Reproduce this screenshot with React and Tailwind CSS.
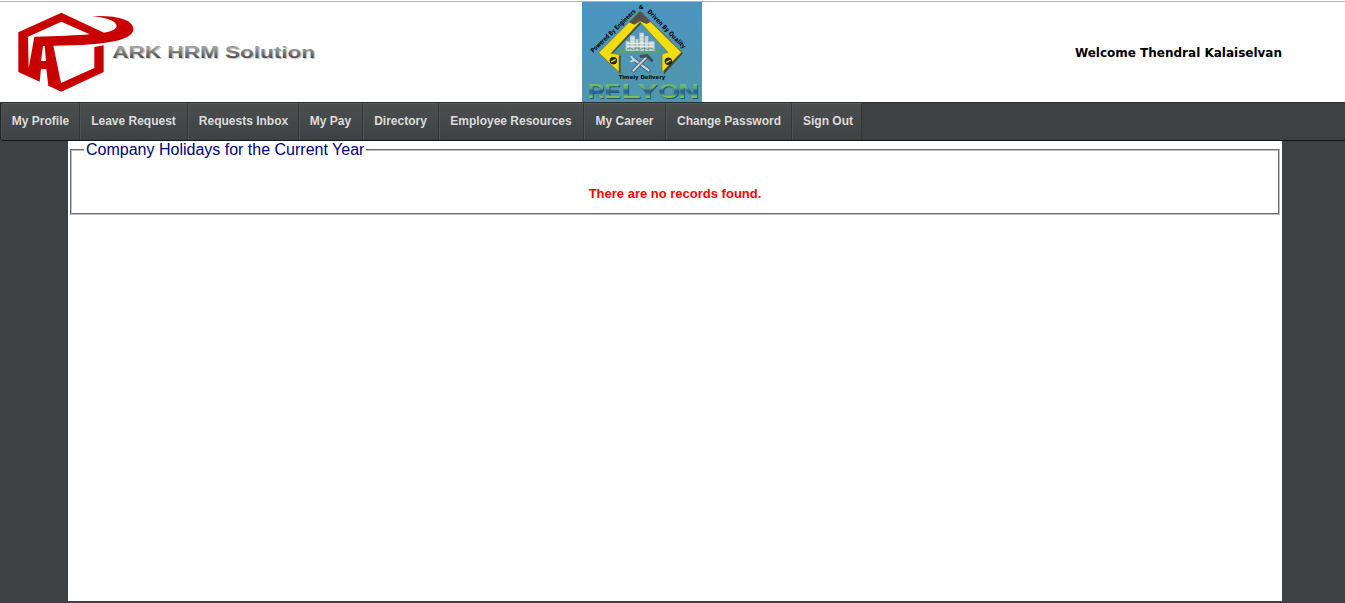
const menu = [
  ['My Profile', 'w-[79px]', 'pl-0'],
  ['Leave Request', 'w-[108px]', 'pr-px'],
  ['Requests Inbox', 'w-[111px]', 'pl-0'],
  ['My Pay', 'w-[64px]', 'pr-px'],
  ['Directory', 'w-[76px]', 'pr-px'],
  ['Employee Resources', 'w-[145px]', 'pr-px'],
  ['My Career', 'w-[82px]', 'pr-px'],
  ['Change Password', 'w-[126px]', 'pl-0'],
  ['Sign Out', 'w-[70px]', 'pl-[2px]'],
];

const relyonLetters = [
  ['R', 47, 50],
  ['E', 97, 48],
  ['L', 148, 58],
  ['Y', 196, 62],
  ['O', 258, 64],
  ['N', 319, 62],
];

function ArkLogo() {
  return (
    <svg className="block h-[100px] w-[330px]" viewBox="0 6 990 300">
      <defs>
        <linearGradient id="steel" x1="0" y1="0" x2="0" y2="1">
          <stop offset="0.2" stopColor="#a0a0a0" />
          <stop offset="0.85" stopColor="#454545" />
        </linearGradient>
      </defs>
      <g fill="#c80000">
        <path d="M55 97 L184 38 L312 98 Q349 92 350 79 Q349 56 276 48 Q400 45 400 89 Q398 110 350 122 Q290 136 160 137 L183 249 L283 204 L283 141 L311 136 L311 216 L184 275 L145 257 L139 207 L123 207 L119 245 L55 216 Z" />
      </g>
      <path fill="#fff" d="M84 110 L184 65 L269 103 Q210 108 103 110 L86 205 Z" />
      <path fill="#fff" d="M129 138 L134 138 L138 183 L123 183 Z" />
      <text x="341" y="178" fontFamily="Liberation Sans, sans-serif" fontWeight="700" fontSize="48" textLength="608" lengthAdjust="spacingAndGlyphs" fill="#c9c9c9">ARK HRM Solution</text>
      <text x="337" y="175" fontFamily="Liberation Sans, sans-serif" fontWeight="700" fontSize="48" textLength="608" lengthAdjust="spacingAndGlyphs" fill="url(#steel)">ARK HRM Solution</text>
    </svg>
  );
}

function RelyonLogo() {
  return (
    <svg className="block h-[100px] w-[120px]" viewBox="30 6 360 300">
      <defs>
        <linearGradient id="sky" x1="0" y1="0" x2="0.3" y2="1">
          <stop offset="0" stopColor="#4a94c6" />
          <stop offset="1" stopColor="#5096ae" />
        </linearGradient>
        <linearGradient id="word" gradientUnits="userSpaceOnUse" x1="0" y1="250" x2="0" y2="296">
          <stop offset="0" stopColor="#78bd70" />
          <stop offset="0.3" stopColor="#62ae78" />
          <stop offset="0.5" stopColor="#24629a" />
          <stop offset="0.65" stopColor="#2c6f99" />
          <stop offset="0.85" stopColor="#78bd62" />
        </linearGradient>
        <path id="leftSlope" d="M64 159 L196 32" />
        <path id="rightSlope" d="M225 36 L336 150" />
      </defs>
      <rect x="30" y="6" width="360" height="300" fill="url(#sky)" />
      <path d="M206 34 L330 157 L273 220 L273 163 L291 157 L206 66 L117 160 L143 164 L143 218 L80 159 Z" fill="#3e4b32" transform="translate(3 3)" />
      <path d="M204 34 L328 157 L270 217 L270 162 L288 157 L204 66 L117 160 L141 163 L141 217 L80 158 Z" fill="#f2dc12" stroke="#80721d" strokeWidth="2" />
      <path d="M204 33 L236 65 L224 72 L204 64 L187 74 L171 67 Z" fill="#55504b" />
      <path d="M151 145 L256 145 L269 159 L138 159 Z" fill="#5b9f72" />
      <path d="M161 124h12v29h-12zM174 107h15v46h-15zM190 117h10v36h-10zM202 98h14v55h-14zM218 108h11v45h-11zM230 124h18v29h-18z" fill="#c4d6d6" stroke="#87a4ae" strokeWidth="1" />
      <path d="M163 130h82M165 139h80M177 115h10M205 107h8M205 117h8M205 127h8M178 125h8" stroke="#f0f1e7" strokeWidth="3" />
      <path d="M164 148q10-8 20 0q12-9 21 0q11-7 21 0q10-7 19 0" fill="none" stroke="#6b957a" strokeWidth="3" />
      <g fill="none" strokeLinecap="round">
        <path d="M185 178 L231 212" stroke="#385f79" strokeWidth="11" />
        <path d="M184 177 L230 211" stroke="#d0dde2" strokeWidth="6" />
        <path d="M178 170 L187 181 L177 184" stroke="#d0dde2" strokeWidth="5" />
        <path d="M222 173 L184 212" stroke="#456079" strokeWidth="11" />
        <path d="M222 173 L184 212" stroke="#d2d6cd" strokeWidth="6" />
        <path d="M207 169 L225 167 L239 181" stroke="#424b5c" strokeWidth="9" />
      </g>
      <g stroke="#191a17" strokeWidth="3">
        <circle cx="124" cy="182" r="10" fill="#2c2c20" />
        <circle cx="289" cy="184" r="10" fill="#2c2c20" />
        <path d="M117 186 L131 178M282 188 L296 180" stroke="#eedc2a" strokeWidth="4" />
      </g>
      <g fill="#050709" fontFamily="DejaVu Sans, sans-serif" fontWeight="700">
        <text fontSize="19" textLength="178" lengthAdjust="spacingAndGlyphs"><textPath href="#leftSlope" textLength="178" lengthAdjust="spacingAndGlyphs">Powered By Engineers</textPath></text>
        <text fontSize="19" textLength="155" lengthAdjust="spacingAndGlyphs"><textPath href="#rightSlope" textLength="155" lengthAdjust="spacingAndGlyphs">Driven By Quality</textPath></text>
        <text x="200" y="27" fontSize="17">&amp;</text>
        <text x="140" y="236" fontSize="16" textLength="140" lengthAdjust="spacingAndGlyphs">Timely Delivery</text>
      </g>
      <g fontFamily="Liberation Sans, sans-serif" fontWeight="700" fontSize="60">
        <text y="296" fill="#29566a">
          {relyonLetters.map(([letter, x, width]) => (
            <tspan key={letter} x={x + 3} textLength={width} lengthAdjust="spacingAndGlyphs">{letter}</tspan>
          ))}
        </text>
        <text y="294" fill="url(#word)">
          {relyonLetters.map(([letter, x, width]) => (
            <tspan key={letter} x={x} textLength={width} lengthAdjust="spacingAndGlyphs">{letter}</tspan>
          ))}
        </text>
      </g>
    </svg>
  );
}

export default function App() {
  return (
    <div className="flex h-[603px] w-[1345px] flex-col overflow-hidden bg-[#3d4143] font-['Liberation_Sans',sans-serif]">
      <header className="flex h-[102px] shrink-0 bg-white pt-px">
        <div className="flex w-full items-start border-t border-[#b0b0b0]">
          <ArkLogo />
          <div className="ml-[252px]"><RelyonLogo /></div>
          <div className="mr-[63px] ml-auto self-center pt-px text-[12px] leading-4 font-bold whitespace-nowrap text-black font-['DejaVu_Sans',sans-serif]">Welcome Thendral Kalaiselvan</div>
        </div>
      </header>
      <nav className="flex h-[39px] shrink-0 overflow-hidden rounded-l-[4px] border-y border-l border-t-[#2a2c2e] border-b-[#131517] border-l-[#222426] bg-[#3d4143]">
        {menu.map(([label, width, nudge]) => (
          <a key={label} className={`${width} ${nudge} flex shrink-0 justify-center border-t border-r border-l border-t-[#5a5c5c] border-r-[#343738] border-l-[#505353] bg-linear-to-b from-[#4c4e4e] to-[#3e4244] pt-[9px] text-xs leading-4 font-bold whitespace-nowrap text-[#dcdcdc]`}>{label}</a>
        ))}
      </nav>
      <main className="mx-[68px] h-[460px] w-[1214px] bg-white px-[2px]">
        <fieldset className="h-[74px] w-[1210px] border-2 border-[#c0c0c0] [border-style:groove] px-[12px]">
          <legend className="px-[2px] text-base leading-[18px] text-[#000080]">Company Holidays for the Current Year</legend>
          <p className="mt-[27px] text-center text-[13px] leading-4 font-bold text-[#ff0000]">There are no records found.</p>
        </fieldset>
      </main>
    </div>
  );
}
